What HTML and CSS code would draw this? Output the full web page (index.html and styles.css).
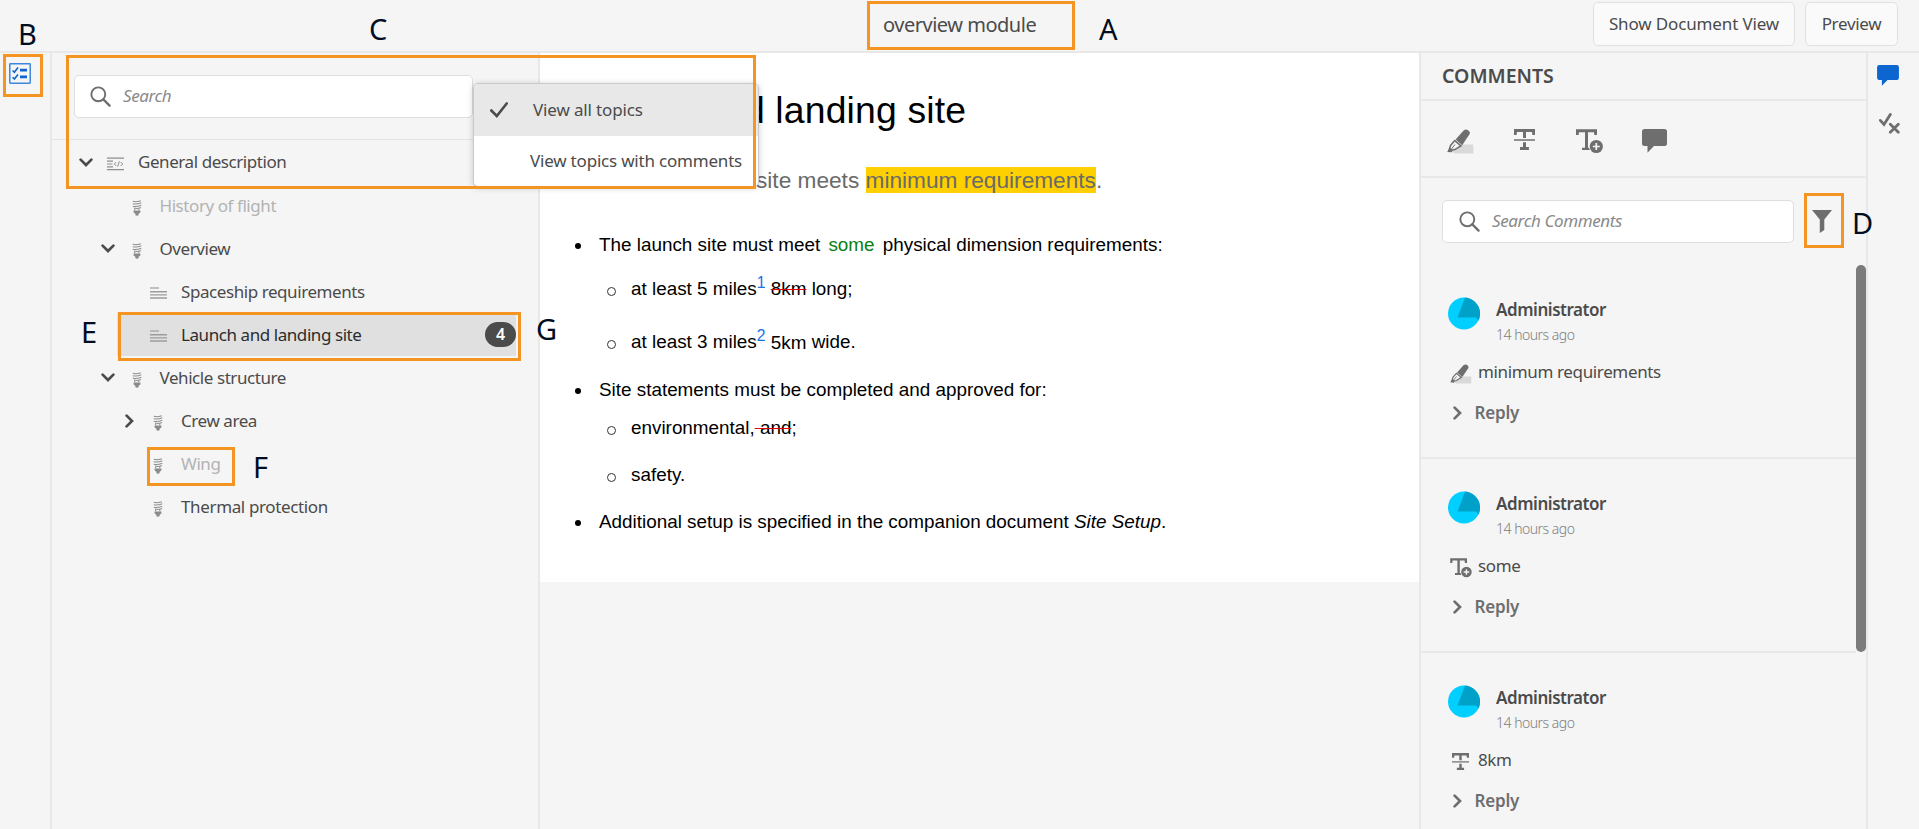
FILE: index.html
```html
<!DOCTYPE html>
<html lang="en">
<head>
<meta charset="utf-8">
<title>overview module</title>
<link rel="stylesheet" href="styles.css">
</head>
<body>
<svg width="0" height="0" class="defs">
  <defs>
    <symbol id="i-chev-down" viewBox="0 0 14 9"><path d="M1.6 1.6 7 7l5.400-5.400" fill="none" stroke="currentColor" stroke-width="2.700" stroke-linecap="round" stroke-linejoin="miter"/></symbol>
    <symbol id="i-chev-right" viewBox="0 0 9 14"><path d="M1.600 1.600 7 7l-5.400 5.400" fill="none" stroke="currentColor" stroke-width="2.700" stroke-linecap="round"/></symbol>
    <symbol id="i-search" viewBox="0 0 22 22"><circle cx="8.700" cy="8.700" r="7.300" fill="none" stroke="currentColor" stroke-width="2"/><path d="M14 14l6.500 6.500" stroke="currentColor" stroke-width="2.400" stroke-linecap="round"/></symbol>
    <symbol id="i-key" viewBox="0 0 10 16"><path d="M.8 1.300Q4 2.300 8.800.7M.8 3.800Q5 4.600 9.300 2.800M.8 6.300Q5 7 9.300 5.200M3.400 8.400Q6.500 8.600 9 7.400" stroke="#8e8e8e" stroke-width="1.100" fill="none"/><path d="M2.700 7.600v2.600M6.800 8.600v1.600" stroke="#8e8e8e" stroke-width="1.100"/><path d="M1.600 10.400h6.800v2L6.600 13.800v1.400L5 15.800l-1.600-.6v-1.400L1.600 12.400z" fill="#8a8a8a"/></symbol>
    <symbol id="i-topic" viewBox="0 0 17 12"><path d="M0 1h9" stroke="#adadad" stroke-width="1.500"/><path d="M0 4.800h17M0 7.900h17M0 11h17" stroke="#9c9c9c" stroke-width="1.400"/></symbol>
    <symbol id="i-map" viewBox="0 0 17 14"><path d="M0 1.200h17M0 12.700h17" stroke="#8e8e8e" stroke-width="1.200"/><path d="M0 4.200h6M0 7h5.500M0 9.800h6" stroke="#8e8e8e" stroke-width="1.200"/><path d="M9.300 5 7.300 7l2 2M13.700 5l2 2-2 2M12.400 4.300l-1.800 5.400" fill="none" stroke="#8e8e8e" stroke-width="1"/></symbol>
    <symbol id="i-highlight" viewBox="0 0 27 25"><path d="M13 15.500h13.300v9H8L5 23z" fill="#d9d9d9"/><path d="M16.600 1.600Q18.800-.3 20.700 1l1.400 1.300q1.300 1.400.4 3L15.200 16.200 8.600 10.600z" fill="currentColor"/><path d="M7.800 11.600 3.600 16.400 1.800 21.800l6-1.200 6.200-3.700z" fill="none" stroke="currentColor" stroke-width="1.500"/><path d="M.2 22.900 3 18.500 5.800 21.500 4.600 23.300z" fill="currentColor"/><path d="M4.500 20 8 15.500" stroke="currentColor" stroke-width="1"/></symbol>
    <symbol id="i-strike" viewBox="0 0 21 21"><path d="M0 0h21v5.900h-2.600L18 3h-6v6H9V3H3l-.4 2.900H0z" fill="currentColor"/><path d="M0 11h21" stroke="currentColor" stroke-width="1.500"/><path d="M9 13.200h3v4.900h2.900V21H6v-2.900h3z" fill="currentColor"/></symbol>
    <symbol id="i-insert" viewBox="0 0 27 25"><path d="M0 .2h21v5.900h-2.600L18 3.200h-6v15.500h2v2.400H6v-2.400h3V3.200H3l-.4 2.900H0z" fill="currentColor"/><circle cx="20.300" cy="17.500" r="7.400" fill="#f5f5f5"/><circle cx="20.300" cy="17.500" r="6.600" fill="currentColor"/><path d="M20.300 14v7M16.800 17.500h7" stroke="#f5f5f5" stroke-width="1.700"/></symbol>
    <symbol id="i-bubble" viewBox="0 0 25 24"><path d="M2.500 0h20Q25 0 25 2.500v12Q25 17 22.500 17H12l-6.500 6.800V17h-3Q0 17 0 14.500v-12Q0 0 2.500 0z" fill="currentColor"/></symbol>
    <symbol id="i-filter" viewBox="0 0 20 23"><path d="M0 0h20L12.300 9.500V20L7.800 23V9.500z" fill="currentColor"/></symbol>
    <symbol id="i-checkx" viewBox="0 0 21 22"><path d="M1.300 7.400 5 11.400 11.300 1.500M11.300 11.200l8 8M19.300 11.200l-8 8" fill="none" stroke="currentColor" stroke-width="2.800" stroke-linecap="round"/></symbol>
    <symbol id="i-tasks" viewBox="0 0 22 21"><rect x=".8" y=".8" width="20.400" height="19.400" rx=".6" fill="none" stroke="#3c86dc" stroke-width="1.500"/><path d="M11 5.700h7v2.800h-7zM11 12.500h7v2.800h-7z" fill="#0d66d0"/><path d="M3.600 7.500l1.800 1.800L9 4.600M3.600 14.300l1.800 1.800L9 11.400" fill="none" stroke="#0d66d0" stroke-width="1.600"/></symbol>
    <symbol id="i-check" viewBox="0 0 18 16"><path d="M1.300 8.500 6.800 14 16.700 1.500" fill="none" stroke="currentColor" stroke-width="2.600" stroke-linecap="round"/></symbol>
    <symbol id="i-avatar" viewBox="0 0 32 32"><circle cx="16" cy="16" r="16" fill="#00cfff"/><path d="M17 .1A16 16 0 0 1 30.500 23L28 20H9.500z" fill="#00a1c9"/></symbol>
  </defs>
</svg>

<div class="app">
  <header class="topbar">
    <h1 class="doc-name">overview module</h1>
    <div class="actions">
      <button class="btn btn-view">Show Document View</button>
      <button class="btn btn-preview">Preview</button>
    </div>
  </header>

  <div class="workspace">
    <nav class="rail rail-left"><svg class="rail-tasks"><use href="#i-tasks"/></svg></nav>

    <aside class="topics">
      <div class="topics-search">
        <div class="search"><svg><use href="#i-search"/></svg><span>Search</span></div>
        <div class="menu">
          <div class="menu-item selected"><svg><use href="#i-check"/></svg><span>View all topics</span></div>
          <div class="menu-item"><span>View topics with comments</span></div>
        </div>
      </div>
      <ul class="tree">
        <li class="node root"><i class="tw"><svg class="down"><use href="#i-chev-down"/></svg></i><i class="ic"><svg class="map"><use href="#i-map"/></svg></i><span>General description</span></li>
        <li class="node l1 muted"><i class="tw"></i><i class="ic"><svg class="key"><use href="#i-key"/></svg></i><span>History of flight</span></li>
        <li class="node l1"><i class="tw"><svg class="down"><use href="#i-chev-down"/></svg></i><i class="ic"><svg class="key"><use href="#i-key"/></svg></i><span>Overview</span></li>
        <li class="node l2"><i class="tw"></i><i class="ic"><svg class="topic"><use href="#i-topic"/></svg></i><span>Spaceship requirements</span></li>
        <li class="node l2 current"><i class="tw"></i><i class="ic"><svg class="topic"><use href="#i-topic"/></svg></i><span>Launch and landing site</span><b class="count">4</b></li>
        <li class="node l1"><i class="tw"><svg class="down"><use href="#i-chev-down"/></svg></i><i class="ic"><svg class="key"><use href="#i-key"/></svg></i><span>Vehicle structure</span></li>
        <li class="node l2"><i class="tw"><svg class="right"><use href="#i-chev-right"/></svg></i><i class="ic"><svg class="key"><use href="#i-key"/></svg></i><span>Crew area</span></li>
        <li class="node l2 muted"><i class="tw"></i><i class="ic"><svg class="key"><use href="#i-key"/></svg></i><span>Wing</span></li>
        <li class="node l2"><i class="tw"></i><i class="ic"><svg class="key"><use href="#i-key"/></svg></i><span class="wide">Thermal protection</span></li>
      </ul>
    </aside>

    <main class="canvas">
      <article class="page">
        <h2 class="title">Launch and landing site</h2>
        <p class="shortdesc">site meets <mark>minimum requirements</mark>.</p>
        <ul class="list">
          <li><div class="line">The launch site must meet <ins>some</ins> physical dimension requirements:</div>
            <ul class="sub">
              <li class="line s1">at least 5 miles<sup>1</sup> <del>8km</del> long;</li>
              <li class="line s2">at least 3 miles<sup>2</sup> <span class="low">5km</span> wide.</li>
            </ul>
          </li>
          <li class="m2"><div class="line">Site statements must be completed and approved for:</div>
            <ul class="sub">
              <li class="line s3">environmental,<del> and</del>;</li>
              <li class="line s4">safety.</li>
            </ul>
          </li>
          <li class="m3"><div class="line">Additional setup is specified in the companion document <em>Site Setup</em>.</div></li>
        </ul>
      </article>
    </main>

    <aside class="comments">
      <h3 class="comments-title">COMMENTS</h3>
      <div class="tools">
        <svg class="t-hl"><use href="#i-highlight"/></svg>
        <svg class="t-st"><use href="#i-strike"/></svg>
        <svg class="t-in"><use href="#i-insert"/></svg>
        <svg class="t-bu"><use href="#i-bubble"/></svg>
      </div>
      <div class="comments-search">
        <div class="search"><svg><use href="#i-search"/></svg><span>Search Comments</span></div>
        <svg class="filter"><use href="#i-filter"/></svg>
      </div>
      <div class="feed">
        <div class="feed-list">
          <section class="comment">
            <div class="who"><svg class="avatar"><use href="#i-avatar"/></svg><div><div class="name">Administrator</div><div class="time">14 hours ago</div></div></div>
            <div class="what"><i class="kind"><svg class="k-wide"><use href="#i-highlight"/></svg></i><span>minimum requirements</span></div>
            <div class="reply"><svg><use href="#i-chev-right"/></svg><span>Reply</span></div>
          </section>
          <section class="comment">
            <div class="who"><svg class="avatar"><use href="#i-avatar"/></svg><div><div class="name">Administrator</div><div class="time">14 hours ago</div></div></div>
            <div class="what"><i class="kind"><svg class="k-wide"><use href="#i-insert"/></svg></i><span>some</span></div>
            <div class="reply"><svg><use href="#i-chev-right"/></svg><span>Reply</span></div>
          </section>
          <section class="comment">
            <div class="who"><svg class="avatar"><use href="#i-avatar"/></svg><div><div class="name">Administrator</div><div class="time">14 hours ago</div></div></div>
            <div class="what"><i class="kind"><svg class="k-strike"><use href="#i-strike"/></svg></i><span>8km</span></div>
            <div class="reply"><svg><use href="#i-chev-right"/></svg><span>Reply</span></div>
          </section>
        </div>
        <div class="scrollbar"></div>
      </div>
    </aside>

    <nav class="rail rail-right">
      <svg class="r-bubble"><use href="#i-bubble"/></svg>
      <svg class="r-check"><use href="#i-checkx"/></svg>
    </nav>
  </div>

  <div class="callout box-a"></div><div class="letter let-a">A</div>
  <div class="callout box-b"></div><div class="letter let-b">B</div>
  <div class="callout box-c"></div><div class="letter let-c">C</div>
  <div class="callout box-d"></div><div class="letter let-d">D</div>
  <div class="callout box-e"></div><div class="letter let-e">E</div>
  <div class="callout box-f"></div><div class="letter let-f">F</div>
  <div class="letter let-g">G</div>
</div>
</body>
</html>
```

FILE: styles.css
```css
* { box-sizing: border-box; }
body {
  margin: 0;
  background: #f5f5f5;
  color: #4b4b4b;
  font: 17px/24px "Noto Sans", sans-serif;
  letter-spacing: -0.43px;
}
.defs { position: absolute; }
svg { display: block; flex: none; }
h1, h2, h3, p, ul { margin: 0; padding: 0; font-weight: 400; list-style: none; }
i { font-style: normal; }

.app { position: relative; width: 1919px; height: 829px; overflow: hidden; display: flex; flex-direction: column; }

/* top bar */
.topbar { height: 53px; flex: none; border-bottom: 2px solid #e8e8e8; display: flex; justify-content: space-between; align-items: flex-start; padding: 2px 21px 0 883px; }
.doc-name { font-size: 20px; line-height: 46px; letter-spacing: -0.48px; }
.actions { display: flex; gap: 10px; }
.btn { height: 44px; padding: 0 0 1px; border: 1px solid #e0e0e0; border-radius: 5px; background: #fafafa; color: #4b4b4b; font: inherit; letter-spacing: -0.14px; }
.btn-view { width: 202px; }
.btn-preview { width: 93px; letter-spacing: -0.3px; }

/* columns */
.workspace { flex: 1; min-height: 0; display: flex; }
.rail-left { width: 52px; border-right: 2px solid #e8e8e8; padding: 10px 0 0 9px; }
.rail-tasks { width: 22px; height: 21px; }
.topics { width: 488px; border-right: 2px solid #e8e8e8; }
.canvas { width: 879px; }
.comments { width: 449px; border: solid #e8e8e8; border-width: 0 2px; display: flex; flex-direction: column; }
.rail-right { flex: 1; padding: 12px 0 0 9px; display: flex; flex-direction: column; gap: 27px; }
.r-bubble { width: 22px; height: 21px; color: #0d66d0; }
.r-check { width: 21px; height: 22px; margin-left: 2px; color: #6e6e6e; }

/* search fields */
.search { height: 43px; display: flex; align-items: center; gap: 12px; padding: 0 15px 1px; background: #fff; border: 1px solid #dedede; border-radius: 5px; font-style: italic; color: #8a8a8a; }
.search svg { width: 21px; height: 21px; color: #6e6e6e; }
.topics-search { position: relative; height: 87px; padding: 22px 65px 0 22px; border-bottom: 1px solid #e4e4e4; }

.menu { position: absolute; left: 421px; top: 30px; width: 286px; height: 104px; z-index: 2; background: #fff; border: 1px solid #cacaca; border-radius: 5px; box-shadow: 0 1px 6px rgba(0,0,0,.2); overflow: hidden; letter-spacing: -0.2px; }
.menu-item { height: 52px; display: flex; align-items: center; padding: 0 0 2px 56px; }
.menu-item.selected { background: #e8e8e8; padding: 0 0 0 16px; gap: 25px; letter-spacing: -0.14px; }
.menu-item svg { width: 18px; height: 16px; }

/* topic tree */
.node { height: 43px; margin-left: 22px; margin-right: 22px; padding-left: 5px; display: flex; align-items: center; }
.node.root { height: 44px; }
.node.l1 { margin-left: 43.500px; }
.node.l2 { margin-left: 65px; }
.tw { width: 14px; display: flex; justify-content: center; margin-right: 13px; }
.ic { width: 18px; display: flex; justify-content: center; margin-right: 14px; }
.down { width: 14px; height: 9px; }
.right { width: 9px; height: 14px; }
.map { width: 17px; height: 14px; margin-top: 3px; }
.key { width: 10px; height: 16px; margin-top: 4px; }
.topic { width: 17px; height: 12px; margin-top: 2px; }
.muted span { color: #b3b3b3; }
.wide { letter-spacing: -0.36px; padding-top: 1px; }
.current { background: #e0e0e0; color: #2c2c2c; }
.count { width: 31px; height: 25px; margin: 0 0 1px auto; border-radius: 13px; background: #4b4b4b; color: #fff; font-size: 16px; font-weight: 600; line-height: 25px; text-align: center; letter-spacing: 0; }

/* document */
.page { height: 529px; background: #fff; padding: 35px 0 0 32px; color: #000; font: 18.880px/24px "Liberation Sans", Arial, sans-serif; letter-spacing: 0; }
.title { margin-left: -4px; font-size: 37.330px; line-height: 44px; letter-spacing: 0.17px; }
.shortdesc { margin-top: 35px; padding-left: 184px; font-size: 22.670px; line-height: 26px; color: #6a6a6a; white-space: nowrap; }
mark { background: #ffd000; color: inherit; }
.list { margin-top: 40px; padding-left: 27px; }
.list > li { list-style: none; }
.line { position: relative; height: 24px; white-space: nowrap; }
.list > li > .line::before { content: ""; position: absolute; left: -24px; top: 10px; width: 6px; height: 6px; border-radius: 50%; background: #000; }
.sub { padding-left: 32px; }
.sub .line::before { content: ""; position: absolute; left: -24px; top: 9.500px; width: 7px; height: 7px; border-radius: 50%; border: 1.200px solid #333; }
.s1 { margin-top: 20px; }
.s2 { margin-top: 29px; }
.m2 { margin-top: 24px; }
.s3 { margin-top: 14px; }
.s4, .m3 { margin-top: 23px; }
ins { color: #0a8010; text-decoration: none; padding: 0 3px; }
del { text-decoration: line-through #e60000 1px; }
sup { font-size: 15.700px; line-height: 0; vertical-align: 7px; color: #1473e6; }
.low { display: inline-block; line-height: 20px; vertical-align: -1px; }

/* comments panel */
.comments-title { height: 48px; flex: none; padding-left: 21px; border-bottom: 2px solid #e8e8e8; font-size: 19.500px; font-weight: 600; line-height: 45px; letter-spacing: 0; }
.tools { height: 77px; flex: none; border-bottom: 2px solid #e8e8e8; display: flex; align-items: flex-start; padding: 28px 0 0 26px; color: #6e6e6e; }
.t-hl { width: 27px; height: 25px; }
.t-st { width: 21px; height: 21px; margin-left: 40px; }
.t-in { width: 27px; height: 25px; margin-left: 41px; }
.t-bu { width: 25px; height: 24px; margin-left: 39px; }
.comments-search { height: 87px; flex: none; display: flex; align-items: flex-start; padding: 22px 0 0 21px; }
.comments-search .search { width: 352px; padding-left: 16px; letter-spacing: -0.38px; }
.filter { width: 20px; height: 23px; margin: 10px 0 0 18px; color: #6e6e6e; }
.feed { flex: 1; min-height: 0; display: flex; overflow: hidden; }
.feed-list { width: 435px; }
.scrollbar { width: 10px; height: 387px; border-radius: 5px; background: #7b7b7b; }
.comment { height: 194px; padding: 32px 0 0 27px; border-bottom: 2px solid #e8e8e8; }
.who { display: flex; gap: 16px; }
.avatar { width: 32px; height: 33px; }
.name { font-weight: 600; line-height: 25px; letter-spacing: -0.45px; }
.time { padding-top: 1px; font-size: 14px; font-weight: 300; letter-spacing: -0.5px; color: #808080; }
.what { margin-top: 12px; display: flex; align-items: center; line-height: 26px; letter-spacing: -0.36px; }
.kind { width: 23px; margin: 3px 6px 0 1px; display: flex; justify-content: center; color: #6e6e6e; }
.k-wide { width: 22px; height: 20px; }
.k-strike { width: 17px; height: 17px; }
.reply { margin-top: 15px; padding-left: 5px; display: flex; align-items: center; gap: 12.500px; font-weight: 600; line-height: 26px; color: #6e6e6e; letter-spacing: -0.2px; }
.reply svg { width: 9px; height: 14px; }

/* callouts over the interface */
.callout { position: absolute; z-index: 3; border: 3px solid #f39423; }
.box-a { left: 867px; top: 1px; width: 208px; height: 49px; }
.box-b { left: 3px; top: 54px; width: 40px; height: 43px; }
.box-c { left: 66px; top: 55px; width: 690px; height: 134px; }
.box-d { left: 1804px; top: 193px; width: 40px; height: 55px; }
.box-e { left: 118px; top: 312px; width: 403px; height: 49px; }
.box-f { left: 147px; top: 447px; width: 88px; height: 39px; }
.letter { position: absolute; z-index: 3; font-size: 29px; line-height: 30px; letter-spacing: 0; color: #020d22; }
.let-a { left: 1099px; top: 14px; }
.let-b { left: 18px; top: 19px; }
.let-c { left: 369px; top: 14px; }
.let-d { left: 1852px; top: 208px; }
.let-e { left: 81px; top: 317px; }
.let-f { left: 253px; top: 452px; }
.let-g { left: 536px; top: 314px; }
```
